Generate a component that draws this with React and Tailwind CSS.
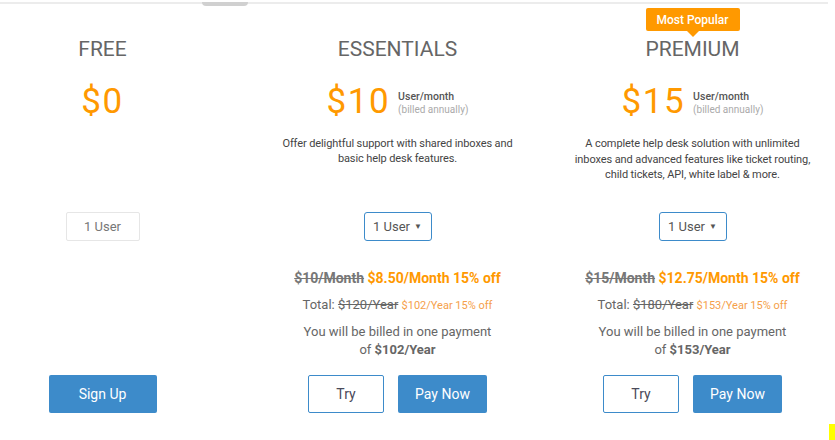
import React from "react";

function Price({ amount, sub }) {
  return (
    <div className="flex justify-center items-start h-[40px] mt-[21px]">
      <span className="text-[35px] leading-[40px] text-[#ff9900] tracking-[1.5px]">{amount}</span>
      {sub && (
        <div className="ml-[8px] mt-[8px] flex flex-col text-left">
          <span className="text-[10.5px] leading-[13px] font-medium text-[#555]">User/month</span>
          <span className="text-[10px] leading-[13px] text-[#aaa]">(billed annually)</span>
        </div>
      )}
    </div>
  );
}

function Dropdown() {
  return (
    <div className="h-[29px] flex justify-center">
      <div className="w-[68px] h-[29px] border border-[#3d8bca] rounded-[3px] flex items-center justify-center text-[13px] text-[#555]">
        1 User <span className="ml-[4px] text-[8px] text-[#555]">▼</span>
      </div>
    </div>
  );
}

function Billing({ was, now, wasY, nowY, pay }) {
  return (
    <div className="h-[107px] mt-[27px] flex flex-col items-center">
      <div className="h-[20px] leading-[20px] text-[14px] font-bold whitespace-nowrap">
        <span className="line-through text-[#777]">{was}</span>{" "}
        <span className="text-[#ff9900]">{now} 15% off</span>
      </div>
      <div className="h-[20px] leading-[20px] mt-[7px] text-[13px] text-[#666] whitespace-nowrap">
        Total: <span className="line-through">{wasY}</span>{" "}
        <span className="text-[11px] text-[#f5a04a]">{nowY} 15% off</span>
      </div>
      <div className="mt-[8px] text-[13px] leading-[18px] text-[#666] text-center">
        You will be billed in one payment
        <br />
        of <span className="font-bold">{pay}</span>
      </div>
    </div>
  );
}

function Buttons() {
  return (
    <div className="flex justify-center gap-[14px]">
      <button className="w-[76px] h-[38px] border border-[#3d8bca] rounded-[2px] bg-white text-[14px] text-[#4a4a5a]">
        Try
      </button>
      <button className="w-[89px] h-[38px] rounded-[2px] bg-[#3d8bca] text-[14px] text-white">
        Pay Now
      </button>
    </div>
  );
}

export default function App() {
  return (
    <div className="relative w-[835px] h-[440px] overflow-hidden bg-white font-[Roboto,'Liberation_Sans',sans-serif]">
      <div className="relative mt-[2px] h-[2px] w-[828px] bg-[#ececec]">
        <div className="absolute left-[202px] top-0 w-[46px] h-[4px] rounded-b-[6px] bg-[#d0d0d0]" />
      </div>
      <div className="flex ml-[-45px]">
        {/* FREE */}
        <div className="w-[295px] shrink-0 flex flex-col items-stretch">
          <div className="h-[33px]" />
          <div className="h-[24px] leading-[24px] text-[21px] text-[#666] text-center">FREE</div>
          <Price amount="$0" />
          <div className="h-[76px] mt-[14px]" />
          <div className="h-[29px] flex justify-center">
            <div className="w-[74px] h-[29px] border border-[#e6e6e6] rounded-[2px] flex items-center justify-center text-[13px] text-[#777]">
              1 User
            </div>
          </div>
          <div className="h-[107px] mt-[27px]" />
          <div className="flex justify-center">
            <button className="w-[108px] h-[38px] rounded-[2px] bg-[#3d8bca] text-[14px] text-white">
              Sign Up
            </button>
          </div>
        </div>
        {/* ESSENTIALS */}
        <div className="w-[295px] shrink-0 flex flex-col items-stretch">
          <div className="h-[33px]" />
          <div className="h-[24px] leading-[24px] text-[21px] text-[#666] text-center">ESSENTIALS</div>
          <Price amount="$10" sub />
          <div className="h-[76px] mt-[14px] px-[20px] text-[11px] tracking-[-0.1px] leading-[15px] text-[#444] text-center">
            Offer delightful support with shared inboxes and basic help desk features.
          </div>
          <Dropdown />
          <Billing was="$10/Month" now="$8.50/Month" wasY="$120/Year" nowY="$102/Year" pay="$102/Year" />
          <Buttons />
        </div>
        {/* PREMIUM */}
        <div className="w-[295px] shrink-0 flex flex-col items-stretch">
          <div className="h-[33px] pt-[4px] flex justify-center">
            <div className="relative w-[94px] h-[23px] bg-[#ff9900] rounded-[2px] flex items-center justify-center text-[12px] font-medium text-white">
              Most Popular
              <div className="absolute left-1/2 -translate-x-1/2 top-[23px] w-0 h-0 border-l-[6px] border-r-[6px] border-t-[6px] border-l-transparent border-r-transparent border-t-[#ff9900]" />
            </div>
          </div>
          <div className="h-[24px] leading-[24px] text-[21px] text-[#666] text-center">PREMIUM</div>
          <Price amount="$15" sub />
          <div className="h-[76px] mt-[14px] px-[26px] text-[11px] tracking-[-0.1px] leading-[15.5px] text-[#444] text-center">
            A complete help desk solution with unlimited inboxes and advanced features like ticket routing, child tickets, API, white label &amp; more.
          </div>
          <Dropdown />
          <Billing was="$15/Month" now="$12.75/Month" wasY="$180/Year" nowY="$153/Year" pay="$153/Year" />
          <Buttons />
        </div>
      </div>
      <div className="absolute right-0 bottom-0 w-[6px] h-[16px] bg-[#ffff00]" />
    </div>
  );
}
